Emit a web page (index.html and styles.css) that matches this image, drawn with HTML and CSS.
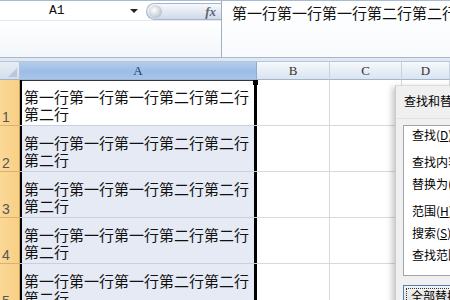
FILE: index.html
```html
<!DOCTYPE html>
<html lang="zh">
<head>
<meta charset="utf-8">
<link rel="stylesheet" href="styles.css">
</head>
<body>
<div class="app">
  <div class="fbar">
    <div class="fbar-left">
      <div class="namerow">
        <div class="namebox"><span class="name">A1</span><span class="drop"></span></div>
        <div class="pill"><span class="knob"></span><span class="fx">fx</span></div>
      </div>
      <div class="blank"></div>
    </div>
    <div class="finput">第一行第一行第一行第二行第二行第二行</div>
  </div>
  <div class="sep"></div>
  <div class="sheet">
    <div class="corner"><span class="tri"></span></div>
    <div class="ch ch-sel">A</div>
    <div class="ch">B</div>
    <div class="ch">C</div>
    <div class="ch">D</div>

    <div class="rh">1</div>
    <div class="cell a a-active">第一行第一行第一行第二行第二行第二行</div>
    <div class="cell"></div><div class="cell"></div><div class="cell"></div>

    <div class="rh">2</div>
    <div class="cell a">第一行第一行第一行第二行第二行第二行</div>
    <div class="cell"></div><div class="cell"></div><div class="cell"></div>

    <div class="rh">3</div>
    <div class="cell a">第一行第一行第一行第二行第二行第二行</div>
    <div class="cell"></div><div class="cell"></div><div class="cell"></div>

    <div class="rh">4</div>
    <div class="cell a">第一行第一行第一行第二行第二行第二行</div>
    <div class="cell"></div><div class="cell"></div><div class="cell"></div>

    <div class="rh">5</div>
    <div class="cell a">第一行第一行第一行第二行第二行第二行</div>
    <div class="cell"></div><div class="cell"></div><div class="cell"></div>
  </div>

  <div class="dialog">
    <div class="dtitle">查找和替换</div>
    <div class="tabs"><span class="tab">查找(<u>D</u>)</span></div>
    <div class="panel">
      <div class="prow">查找内容(<u>N</u>):</div>
      <div class="prow">替换为(<u>E</u>):</div>
      <div class="prow gap">范围(<u>H</u>):</div>
      <div class="prow">搜索(<u>S</u>):</div>
      <div class="prow">查找范围(<u>L</u>):</div>
    </div>
    <div class="btn"><span class="btn-in">全部替换(<u>A</u>)</span></div>
  </div>
</div>
</body>
</html>
```

FILE: styles.css
```css
* { box-sizing: border-box; }
html, body { margin: 0; padding: 0; }
body {
  width: 450px;
  height: 300px;
  overflow: hidden;
  background: #fff;
  font-family: "Noto Sans CJK SC", "Noto Sans", sans-serif;
}
.app { position: relative; width: 450px; height: 300px; overflow: hidden; }

.fbar {
  display: flex;
  height: 57px;
  border-top: 1px solid #a9bbd3;
}
.fbar-left {
  width: 222px;
  flex: none;
  display: flex;
  flex-direction: column;
  border-right: 1px solid #9fb0c6;
}
.namerow {
  display: flex;
  height: 19px;
  background: #fff;
}
.namebox {
  width: 146px;
  display: flex;
  align-items: center;
}
.name {
  font-family: "Liberation Mono", "DejaVu Sans Mono", monospace;
  font-size: 13px;
  color: #111;
  margin-left: 49px;
}
.drop {
  margin-left: auto;
  margin-right: 8px;
  width: 0; height: 0;
  border-left: 4px solid transparent;
  border-right: 4px solid transparent;
  border-top: 4px solid #222;
}
.pill {
  flex: 1;
  margin-top: 2px;
  height: 17px;
  border-radius: 9px 0 0 9px;
  border: 1px solid #a7b5c9;
  border-right: none;
  background: linear-gradient(#f7f9fc, #dfe6f1 60%, #cfd9e7);
  display: flex;
  align-items: center;
}
.knob {
  width: 13px; height: 13px;
  margin-left: 2px;
  border-radius: 50%;
  background: radial-gradient(circle at 40% 40%, #ffffff, #c9ced6 60%, #9aa3af);
}
.fx {
  margin-left: auto;
  margin-right: 5px;
  font-family: "Liberation Serif", "DejaVu Serif", serif;
  font-style: italic;
  font-weight: bold;
  font-size: 13px;
  color: #5d6673;
}
.blank {
  flex: 1;
  border-top: 1px solid #e3e9f1;
  background: linear-gradient(#ffffff, #f3f6fa);
}
.finput {
  flex: 1;
  min-width: 0;
  padding: 3px 0 0 10px;
  font-size: 15px;
  line-height: 18px;
  white-space: nowrap;
  overflow: hidden;
  color: #111;
  background: linear-gradient(#ffffff, #f8fafd);
}
.sep {
  height: 5px;
  border-top: 1px solid #a5b8d0;
  border-bottom: 1px solid #b6c6da;
  background: #e1e8f2;
}

.sheet {
  display: grid;
  grid-template-columns: 20px 237px 73px 72px 48px;
  grid-template-rows: 18px repeat(5, 46px);
}
.corner {
  background: linear-gradient(#e6edf6, #d4deeb);
  border-right: 1px solid #b4c3d6;
  border-bottom: 1px solid #9eb3cd;
  position: relative;
}
.tri {
  position: absolute;
  right: 2px; bottom: 2px;
  width: 0; height: 0;
  border-left: 9px solid transparent;
  border-bottom: 9px solid #b9c8db;
}
.ch {
  background: linear-gradient(#f6f9fd, #e6edf6 55%, #dbe4ef);
  border-right: 1px solid #c6d2e1;
  border-bottom: 1px solid #9eb6ce;
  font-family: "Liberation Serif", "DejaVu Serif", serif;
  font-size: 13px;
  color: #333;
  display: flex;
  align-items: center;
  justify-content: center;
}
.ch-sel {
  background: linear-gradient(#b4cdee, #9ebde6 55%, #a8c5ea);
  color: #22406b;
  border-right-color: #8eacd3;
}
.rh {
  background: linear-gradient(90deg, #fbd897, #f8cf84);
  border-right: 1px solid #c9a35f;
  border-bottom: 1px solid #d8b26e;
  font-family: "Liberation Sans", Arial, sans-serif;
  font-size: 14px;
  color: #555;
  display: flex;
  align-items: flex-end;
  padding: 0 0 0 2px;
  line-height: 16px;
}
.cell {
  border-right: 1px solid #d6d9de;
  border-bottom: 1px solid #d6d9de;
  background: #fff;
  min-width: 0;
}
.cell.a {
  background: #e6eaf5;
  border-right: none;
  border-bottom-color: #c9cfdc;
  font-size: 15px;
  line-height: 17px;
  color: #111;
  padding: 0 4px 3px 4px;
  display: flex;
  align-items: flex-end;
  box-shadow: inset 2px 0 0 #000, inset -3px 0 0 #000;
}
.cell.a-active {
  background: #fff;
  position: relative;
  box-shadow: inset 2px 0 0 #000, inset -3px 0 0 #000, inset 0 1px 0 #333;
}
.cell.a-active::after {
  content: "";
  position: absolute;
  right: -1px;
  top: 0;
  width: 5px;
  height: 5px;
  background: #000;
}

.dialog {
  position: absolute;
  left: 395px;
  top: 85px;
  width: 90px;
  height: 230px;
  background: #f0f0f0;
  border-left: 1px solid #c9cdd3;
  border-top: 1px solid #d9dce0;
  box-shadow: -3px 2px 6px rgba(0,0,0,0.22);
  font-size: 12px;
  color: #000;
  white-space: nowrap;
}
.dtitle {
  height: 32px;
  line-height: 30px;
  padding-left: 8px;
}
.tabs {
  height: 26px;
  display: flex;
  align-items: flex-end;
  padding-left: 7px;
  border-top: 1px solid #e3e3e3;
}
.tab {
  height: 19px;
  line-height: 17px;
  padding-left: 8px;
  background: #fff;
  border: 1px solid #a0a4ab;
  border-bottom: none;
  width: 80px;
}
.panel {
  margin-left: 7px;
  margin-top: -1px;
  background: #fff;
  border: 1px solid #a0a4ab;
  border-right: none;
  padding: 8px 0 10px 8px;
  height: 133px;
}
.prow {
  height: 20px;
  line-height: 20px;
  margin-bottom: 2px;
}
.prow.gap { margin-top: 7px; }
.btn {
  margin: 9px 0 0 7px;
  height: 22px;
  border: 1px solid #4a7fb8;
  border-right: none;
  background: linear-gradient(#f4f4f4, #dcdcdc);
  padding: 2px;
}
.btn-in {
  display: block;
  height: 100%;
  border: 1px dotted #333;
  border-right: none;
  padding-left: 4px;
  line-height: 14px;
}
u { text-decoration: underline; }
```
